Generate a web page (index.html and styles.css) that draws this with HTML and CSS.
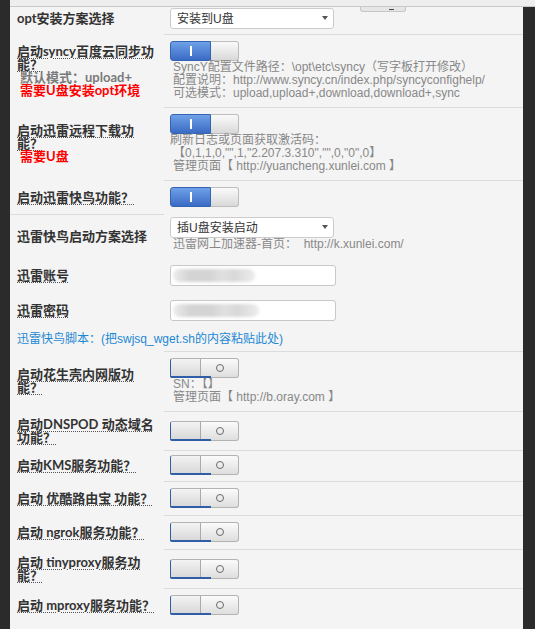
FILE: index.html
```html
<!DOCTYPE html>
<html lang="zh-CN">
<head>
    <meta charset="UTF-8">
    <title>插件设置</title>
    <link rel="stylesheet" href="styles.css">
</head>
<body>
    <div class="topbar"></div>
    <div class="peek"><i></i></div>

    <div class="panel">
        <div class="row first">
            <div class="label"><div><span>opt安装方案选择</span></div></div>
            <div class="value">
                <span class="select"><select><option>安装到U盘</option></select></span>
            </div>
        </div>

        <div class="row">
            <div class="label">
                <div>
                    <span class="name">启动syncy百度云同步功能？</span>
                    <div class="hint">默认模式：upload+</div>
                    <div class="warn">需要U盘安装opt环境</div>
                </div>
            </div>
            <div class="value">
                <span class="switch on"><span class="side"><i class="bar"></i></span><span class="handle"></span></span>
                <div class="desc">
                    <div>SyncY配置文件路径：\opt\etc\syncy（写字板打开修改）</div>
                    <div>配置说明：http://www.syncy.cn/index.php/syncyconfighelp/</div>
                    <div>可选模式：upload,upload+,download,download+,sync</div>
                </div>
            </div>
        </div>

        <div class="row">
            <div class="label">
                <div>
                    <span class="name">启动迅雷远程下载功能？</span>
                    <div class="warn">需要U盘</div>
                </div>
            </div>
            <div class="value">
                <span class="switch on"><span class="side"><i class="bar"></i></span><span class="handle"></span></span>
                <div class="desc">
                    <div class="flush">刷新日志或页面获取激活码：</div>
                    <div>【0,1,1,0,"",1,"2.207.3.310","",0,"0",0】</div>
                    <div>管理页面【 http://yuancheng.xunlei.com 】</div>
                </div>
            </div>
        </div>

        <div class="row">
            <div class="label"><div><span class="name">启动迅雷快鸟功能？</span></div></div>
            <div class="value">
                <span class="switch on"><span class="side"><i class="bar"></i></span><span class="handle"></span></span>
            </div>
        </div>

        <div class="row plain scheme">
            <div class="label"><div><span>迅雷快鸟启动方案选择</span></div></div>
            <div class="value">
                <span class="select"><select><option>插U盘安装启动</option></select></span>
                <div class="desc">迅雷网上加速器-首页：&nbsp; http://k.xunlei.com/</div>
            </div>
        </div>

        <div class="row plain">
            <div class="label"><div><span class="name">迅雷账号</span></div></div>
            <div class="value">
                <div class="field"><span class="blur"></span></div>
            </div>
        </div>

        <div class="row plain">
            <div class="label"><div><span class="name">迅雷密码</span></div></div>
            <div class="value">
                <div class="field"><span class="blur wide"></span></div>
            </div>
        </div>

        <div class="script-link">迅雷快鸟脚本：(把swjsq_wget.sh的内容粘贴此处)</div>

        <div class="row">
            <div class="label"><div><span class="name">启动花生壳内网版功能？</span></div></div>
            <div class="value">
                <span class="switch off"><span class="handle"></span><span class="side"><i class="ring"></i></span></span>
                <div class="desc">
                    <div>SN：【】</div>
                    <div>管理页面【 http://b.oray.com 】</div>
                </div>
            </div>
        </div>

        <div class="row">
            <div class="label"><div><span class="name">启动DNSPOD 动态域名功能？</span></div></div>
            <div class="value">
                <span class="switch off"><span class="handle"></span><span class="side"><i class="ring"></i></span></span>
            </div>
        </div>

        <div class="row short">
            <div class="label"><div><span class="name">启动KMS服务功能？</span></div></div>
            <div class="value">
                <span class="switch off"><span class="handle"></span><span class="side"><i class="ring"></i></span></span>
            </div>
        </div>

        <div class="row">
            <div class="label"><div><span class="name">启动 优酷路由宝 功能？</span></div></div>
            <div class="value">
                <span class="switch off"><span class="handle"></span><span class="side"><i class="ring"></i></span></span>
            </div>
        </div>

        <div class="row">
            <div class="label"><div><span class="name">启动 ngrok服务功能？</span></div></div>
            <div class="value">
                <span class="switch off"><span class="handle"></span><span class="side"><i class="ring"></i></span></span>
            </div>
        </div>

        <div class="row">
            <div class="label"><div><span class="name">启动 tinyproxy服务功能？</span></div></div>
            <div class="value">
                <span class="switch off"><span class="handle"></span><span class="side"><i class="ring"></i></span></span>
            </div>
        </div>

        <div class="row">
            <div class="label"><div><span class="name">启动 mproxy服务功能？</span></div></div>
            <div class="value">
                <span class="switch off"><span class="handle"></span><span class="side"><i class="ring"></i></span></span>
            </div>
        </div>
    </div>
</body>
</html>
```

FILE: styles.css
```css
html, body {
    margin: 0;
}

body {
    height: 629px;
    background-color: #2b2b2b;
    overflow: hidden;
    font-family: "Liberation Sans", "Noto Sans CJK SC", sans-serif;
}

.topbar {
    margin-left: 10px;
    height: 6px;
    background: #eeeeee;
    border-bottom: 1px solid #c8c8c8;
}

.peek {
    position: absolute;
    left: 360px;
    top: 7px;
    width: 44px;
    height: 4px;
    background: #e6e6e6;
    border: 1px solid #c6c6c6;
    border-top: 0;
    border-radius: 0 0 3px 3px;
}

.peek i {
    display: block;
    width: 5px;
    height: 1px;
    margin: 2px 0 0 28px;
    background: #444;
}

.panel {
    min-height: 622px;
    margin: 0 12px 0 10px;
    background: #f4f4f4;
}

.row {
    display: grid;
    grid-template-columns: 154px 1fr;
}

.label {
    display: flex;
    align-items: center;
    padding: 6.5px 7px;
    font-family: Lato, "Noto Sans CJK SC", sans-serif;
    font-size: 13px;
    font-weight: bold;
    line-height: 13px;
    color: #333;
}

.name {
    text-decoration: underline dotted #555;
    text-decoration-thickness: 1px;
    text-underline-offset: 2px;
}

.hint {
    margin-left: 3px;
    color: #7a7a7a;
}

.warn {
    margin-left: 3px;
    color: #ff0000;
}

.value {
    display: flex;
    flex-direction: column;
    justify-content: center;
    align-items: flex-start;
    border-top: 1px solid #dcdcdc;
    padding: 6px 6px 7px;
}

.first .label {
    align-items: flex-start;
    padding-top: 5px;
}

.first .value {
    border-top: 0;
    padding: 1px 6px 5px;
}

.plain .value {
    border-top: 0;
    padding: 7px 6px;
}

.scheme .label {
    border-top: 1px solid #dcdcdc;
}

.scheme .value {
    padding: 3px 6px 7px;
}

.short .value {
    padding: 4px 6px 6px;
}

.desc {
    padding-left: 3px;
    font-size: 12px;
    line-height: 13px;
    color: #888;
}

.desc .flush {
    margin-left: -3px;
}

/* selects */
.select {
    position: relative;
    display: block;
}

.select select {
    appearance: none;
    width: 164px;
    height: 21px;
    padding: 0 6px;
    margin: 0;
    border: 1px solid #cccccc;
    border-radius: 3px;
    background: #fff;
    font-family: "Liberation Sans", "Noto Sans CJK SC", sans-serif;
    font-size: 12px;
    color: #333;
}

.select::after {
    content: "";
    position: absolute;
    right: 6px;
    top: 8px;
    border-left: 3px solid transparent;
    border-right: 3px solid transparent;
    border-top: 4px solid #555;
}

/* text fields */
.field {
    box-sizing: border-box;
    width: 166px;
    height: 21px;
    padding: 3px 2px;
    background: #fff;
    border: 1px solid #c8c8c8;
    border-radius: 3px;
}

.blur {
    display: block;
    width: 82px;
    height: 13px;
    border-radius: 7px;
    background: linear-gradient(90deg, #ebebeb, #d4d4d4 20%, #d4d4d4 45%, #e0e0e0 60%, #d8d8d8 75%, #ececec);
    filter: blur(1.5px);
}

.blur.wide {
    width: 86px;
}

.script-link {
    padding: 5px 7px;
    font-size: 12px;
    line-height: 13px;
    color: #1c88d4;
}

/* switches */
.switch {
    box-sizing: border-box;
    display: flex;
    width: 69px;
    height: 20px;
    flex-shrink: 0;
}

.switch.on .side {
    box-sizing: border-box;
    width: 41px;
    display: flex;
    align-items: center;
    justify-content: center;
    background: linear-gradient(#6fa0e8, #3a6bc4);
    border: 1px solid #3563b3;
    border-radius: 3px 0 0 3px;
}

.bar {
    width: 2px;
    height: 10px;
    background: #fff;
}

.switch.on .handle {
    flex: 1;
    background: linear-gradient(#fafafa, #d9d9d9);
    border: 1px solid #bdbdbd;
    border-left: 0;
    border-radius: 0 3px 3px 0;
}

.switch.off {
    position: relative;
    border: 1px solid #b3b3b3;
    border-left-color: #2f5da6;
    border-radius: 3px;
    background: linear-gradient(#fbfbfb, #dedede);
}

.switch.off::after {
    content: "";
    position: absolute;
    left: -1px;
    bottom: -1px;
    width: 41px;
    height: 2px;
    background: #2f5da6;
    border-radius: 0 0 0 2px;
}

.switch.off .handle {
    width: 29px;
    border-right: 1px solid #aaaaaa;
    background: linear-gradient(#f3f3f3, #d7d7d7);
    border-radius: 2px 0 0 2px;
}

.switch.off .side {
    flex: 1;
    display: flex;
    align-items: center;
    justify-content: center;
}

.ring {
    width: 6px;
    height: 6px;
    border: 1.5px solid #6a6a6a;
    border-radius: 50%;
}
```
